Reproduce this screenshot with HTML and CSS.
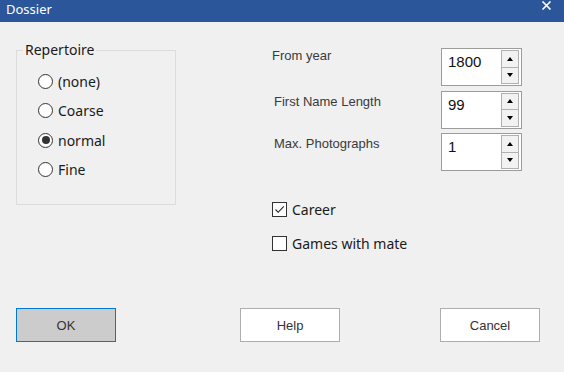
FILE: index.html
```html
<!DOCTYPE html>
<html>
<head>
    <title>Dossier</title>
    <link rel="stylesheet" href="styles.css">
</head>
<body>
    <div class="titlebar">
        <span class="title">Dossier</span>
        <svg class="close" width="11" height="9" viewBox="0 0 11 9">
            <path d="M1.5 0.5 L9.5 8.5 M9.5 0.5 L1.5 8.5" stroke="#fff" stroke-width="1.6" fill="none"/>
        </svg>
    </div>

    <div class="main">
        <fieldset class="group">
            <legend>Repertoire</legend>
            <div class="radios">
                <div class="radio-row"><span class="radio"></span>(none)</div>
                <div class="radio-row"><span class="radio"></span>Coarse</div>
                <div class="radio-row"><span class="radio checked"></span>normal</div>
                <div class="radio-row"><span class="radio"></span>Fine</div>
            </div>
        </fieldset>

        <div class="right">
            <div class="spin-rows">
                <div class="spin-row">
                    <span class="spin-label first">From year</span>
                    <div class="spin">
                        <span class="spin-value">1800</span>
                        <div class="spin-btns">
                            <div class="spin-btn"><span class="arrow up"></span></div>
                            <div class="spin-btn"><span class="arrow down"></span></div>
                        </div>
                    </div>
                </div>
                <div class="spin-row">
                    <span class="spin-label">First Name Length</span>
                    <div class="spin">
                        <span class="spin-value">99</span>
                        <div class="spin-btns">
                            <div class="spin-btn"><span class="arrow up"></span></div>
                            <div class="spin-btn"><span class="arrow down"></span></div>
                        </div>
                    </div>
                </div>
                <div class="spin-row">
                    <span class="spin-label">Max. Photographs</span>
                    <div class="spin">
                        <span class="spin-value">1</span>
                        <div class="spin-btns">
                            <div class="spin-btn"><span class="arrow up"></span></div>
                            <div class="spin-btn"><span class="arrow down"></span></div>
                        </div>
                    </div>
                </div>
            </div>

            <div class="checks">
                <div class="check-row">
                    <span class="checkbox">
                        <svg width="13" height="13" viewBox="0 0 13 13">
                            <path d="M2.5 6.5 L5.2 9.3 L10.8 3.3" stroke="#222" stroke-width="1.1" fill="none"/>
                        </svg>
                    </span>
                    Career
                </div>
                <div class="check-row">
                    <span class="checkbox"></span>
                    Games with mate
                </div>
            </div>
        </div>
    </div>

    <div class="buttons">
        <button class="btn default">OK</button>
        <button class="btn help">Help</button>
        <button class="btn cancel">Cancel</button>
    </div>
</body>
</html>
```

FILE: styles.css
```css
body {
    margin: 0;
    width: 564px;
    height: 372px;
    overflow: hidden;
    background-color: #f0f0f0;
    font-family: "Noto Sans", sans-serif;
    color: #1a1a1a;
}

.titlebar {
    height: 22px;
    background-color: #2b579a;
    display: flex;
    justify-content: space-between;
    align-items: flex-start;
    padding: 0 12px 0 6px;
}

.title {
    font-size: 13px;
    line-height: 18px;
    color: #ffffff;
}

.close {
    margin-top: 1px;
}

.main {
    height: 286px;
    display: flex;
    align-items: flex-start;
    padding-left: 16px;
}

.group {
    box-sizing: border-box;
    width: 160px;
    height: 165px;
    margin: 18px 0 0 0;
    padding: 0 0 0 6px;
    border: 1px solid #dcdcdc;
}

.group legend {
    padding: 0 2px;
    font-size: 14px;
    line-height: 20px;
}

.radios {
    margin: 6.5px 0 0 15px;
    display: flex;
    flex-direction: column;
}

.radio-row {
    height: 29.5px;
    display: flex;
    align-items: center;
    gap: 5px;
    font-size: 14px;
}

.radio {
    box-sizing: border-box;
    width: 15px;
    height: 15px;
    border: 1px solid #333;
    border-radius: 50%;
    background-color: #ffffff;
    display: flex;
    align-items: center;
    justify-content: center;
}

.radio.checked::after {
    content: "";
    width: 8px;
    height: 8px;
    border-radius: 50%;
    background-color: #333;
}

.right {
    margin: 26px 0 0 96px;
    width: 250px;
}

.spin-rows {
    display: flex;
    flex-direction: column;
    gap: 4.5px;
}

.spin-row {
    display: flex;
    justify-content: space-between;
    align-items: flex-start;
    font-family: "Liberation Sans", Arial, sans-serif;
}

.spin-label {
    font-size: 13px;
    line-height: 15px;
    color: #3a3a3a;
    padding: 3px 0 0 2px;
}

.spin-label.first {
    padding: 0;
}

.spin {
    box-sizing: border-box;
    width: 81px;
    height: 38px;
    border: 1px solid #9c9c9c;
    background-color: #ffffff;
    display: flex;
}

.spin-value {
    font-size: 15px;
    line-height: 18px;
    padding: 4px 0 0 6px;
    color: #111;
}

.spin-btns {
    margin: 1px 2px 1px auto;
    width: 18px;
    display: flex;
    flex-direction: column;
}

.spin-btn {
    box-sizing: border-box;
    flex: 1;
    border: 1px solid #b0b0b0;
    background-color: #f2f2f2;
    display: flex;
    align-items: center;
    justify-content: center;
}

.spin-btn + .spin-btn {
    border-top: none;
}

.arrow {
    width: 0;
    height: 0;
    border-left: 3.5px solid transparent;
    border-right: 3.5px solid transparent;
}

.arrow.up {
    border-bottom: 4px solid #000;
}

.arrow.down {
    border-top: 4px solid #000;
}

.checks {
    margin-top: 26.5px;
    display: flex;
    flex-direction: column;
    gap: 10px;
}

.check-row {
    height: 24px;
    display: flex;
    align-items: center;
    gap: 5px;
    font-size: 14px;
}

.checkbox {
    box-sizing: border-box;
    width: 15px;
    height: 15px;
    border: 1px solid #333;
    background-color: #ffffff;
    display: flex;
}

.buttons {
    display: flex;
    padding-left: 16px;
}

.btn {
    box-sizing: border-box;
    width: 100px;
    height: 34px;
    border: 1px solid #adadad;
    background-color: #ffffff;
    font-family: "Liberation Sans", Arial, sans-serif;
    font-size: 13px;
    color: #333;
    padding: 0;
}

.btn.default {
    background-color: #cccccc;
    border-color: #0078d7;
}

.btn.help {
    margin-left: 124px;
}

.btn.cancel {
    margin-left: 100px;
}
```
